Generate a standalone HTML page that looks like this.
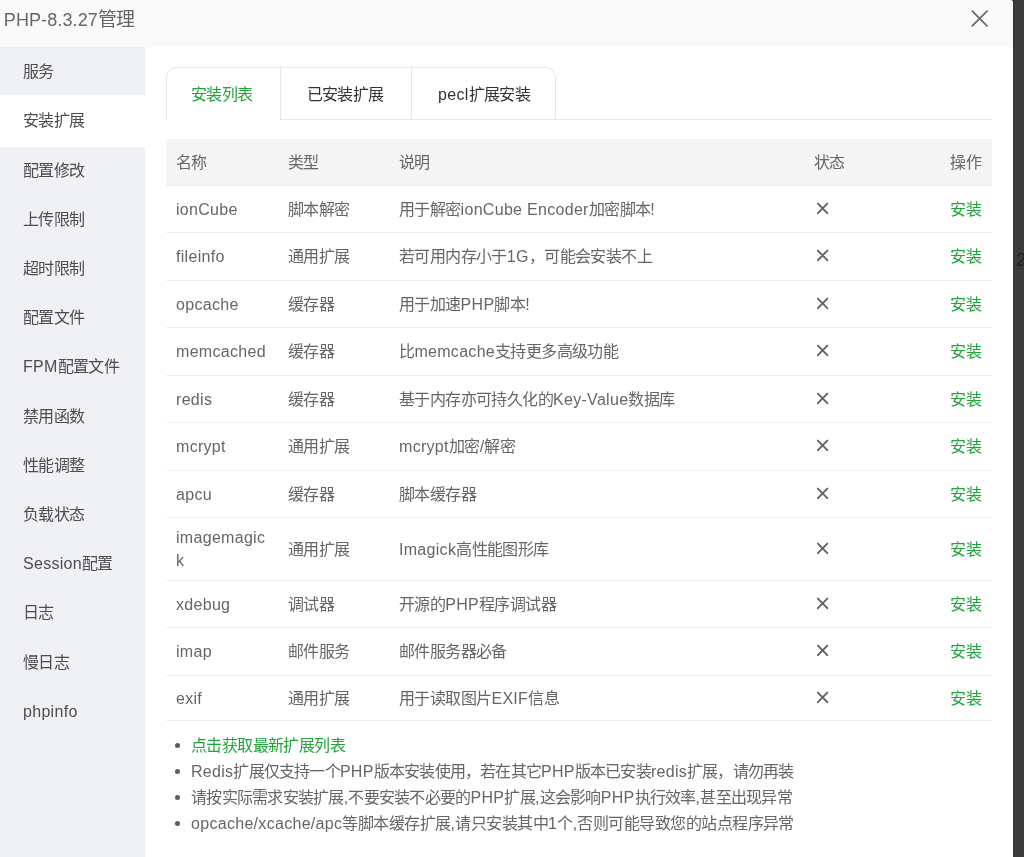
<!DOCTYPE html>
<html lang="zh-CN"><head><meta charset="utf-8">
<style>
*{box-sizing:border-box;margin:0;padding:0}
html,body{font-weight:300;letter-spacing:0.3px;width:1024px;height:857px;overflow:hidden;background:#3b3b3b;font-family:"Liberation Sans",sans-serif}
#modal{will-change:transform;position:absolute;left:0;top:0;width:1013px;height:880px;background:#fff;border-top-right-radius:3px;overflow:hidden}
#hdr{position:absolute;left:0;top:0;width:1013px;height:47px;background:#fafafa}
#title{position:absolute;left:3.8px;top:8.4px;font-size:18px;letter-spacing:0.1px;line-height:24px;color:#666;white-space:nowrap}
#close{position:absolute;left:971px;top:10px}
#side{position:absolute;left:0;top:47px;width:145px;height:830px;background:#f0f1f5}
.si{position:absolute;left:23px;font-size:16px;line-height:20px;color:#4d4d4d;white-space:nowrap}
#act{position:absolute;left:0;top:48px;width:145px;height:52px;background:#fff}
#tabs{position:absolute;left:166px;top:67px;width:390px;height:53px;border:1px solid #e4e7ed;border-bottom:none;border-radius:10px 10px 0 0}
#tabline{position:absolute;left:280px;top:119px;width:712px;height:1px;background:#e4e7ed}
.tsep{position:absolute;top:0;width:1px;height:52px;background:#e4e7ed}
.tt{position:absolute;top:16.8px;font-size:16px;line-height:20px;color:#333;white-space:nowrap}
#thead{position:absolute;left:166px;width:826px;background:#f5f5f5;border-bottom:1px solid #eef0f5}
.row{position:absolute;left:166px;width:826px;border-bottom:1px solid #eef0f5}
.c{position:absolute;font-size:16px;line-height:23px;color:#666;white-space:nowrap}
.g{color:#20a53a}
.x{position:absolute}
#notes{position:absolute;left:166px;top:733px}
.n{position:absolute;left:25px;font-size:16px;line-height:26px;color:#666;white-space:nowrap}
.n.g{color:#20a53a}
.n:before{content:"";position:absolute;left:-16px;top:9.8px;width:5.2px;height:5.2px;border-radius:50%;background:#5a5c62}
#bg2{position:absolute;left:1016px;top:250px;font-size:18px;line-height:20px;color:#222}
.k{letter-spacing:-0.6px}
#edge{position:absolute;left:1013px;top:0;width:1px;height:857px;background:#2f2f2f}
#title .k{font-size:19px;letter-spacing:-0.6px}
</style></head><body>
<div id="modal">
 <div id="hdr"><div id="title">PHP-8.3.27<span class="k">管理</span></div>
  <svg id="close" width="17" height="17" viewBox="0 0 17 17"><path d="M1.3 1.2L16 15.9M16 1.2L1.3 15.9" stroke="#66686d" stroke-width="1.7" stroke-linecap="round" fill="none"/></svg></div>
 <div id="side"><div id="act"></div>
  <div class="si" style="top:15.2px"><span class="k">服务</span></div>
  <div class="si" style="top:64.4px"><span class="k">安装扩展</span></div>
  <div class="si" style="top:113.6px"><span class="k">配置修改</span></div>
  <div class="si" style="top:162.8px"><span class="k">上传限制</span></div>
  <div class="si" style="top:212.0px"><span class="k">超时限制</span></div>
  <div class="si" style="top:261.2px"><span class="k">配置文件</span></div>
  <div class="si" style="top:310.4px">FPM<span class="k">配置文件</span></div>
  <div class="si" style="top:359.6px"><span class="k">禁用函数</span></div>
  <div class="si" style="top:408.8px"><span class="k">性能调整</span></div>
  <div class="si" style="top:458.0px"><span class="k">负载状态</span></div>
  <div class="si" style="top:507.2px">Session<span class="k">配置</span></div>
  <div class="si" style="top:556.4px"><span class="k">日志</span></div>
  <div class="si" style="top:605.6px"><span class="k">慢日志</span></div>
  <div class="si" style="top:654.8px">phpinfo</div>
 </div>
 <div id="tabs">
  <div class="tsep" style="left:113px"></div>
  <div class="tsep" style="left:244px"></div>
  <div class="tt g" style="left:24px"><span class="k">安装列表</span></div>
  <div class="tt" style="left:139.5px"><span class="k">已安装扩展</span></div>
  <div class="tt" style="left:271px">pecl<span class="k">扩展安装</span></div>
 </div>
 <div id="tabline"></div>
 <div id="thead" style="top:139px;height:47px"><div class="c h" style="left:10px;top:11.5px"><span class="k">名称</span></div><div class="c h" style="left:122px;top:11.5px"><span class="k">类型</span></div><div class="c h" style="left:233px;top:11.5px"><span class="k">说明</span></div><div class="c h" style="left:648px;top:11.5px"><span class="k">状态</span></div><div class="c h" style="right:11px;top:11.5px"><span class="k">操作</span></div></div>
 <div class="row" style="top:186px;height:47px"><div class="c" style="left:10px;top:11.5px">ionCube</div><div class="c" style="left:122px;top:11.5px"><span class="k">脚本解密</span></div><div class="c" style="left:233px;top:11.5px"><span class="k">用于解密</span>ionCube Encoder<span class="k">加密脚本</span>!</div><svg class="x" style="left:650px;top:15.5px" width="14" height="14" viewBox="0 0 14 14"><path d="M1.9 1.6L11.3 11.2M11.3 1.6L1.9 11.2" stroke="#5f6268" stroke-width="1.9" stroke-linecap="round"/></svg><div class="c g" style="right:11px;top:11.5px"><span class="k">安装</span></div></div>
 <div class="row" style="top:233px;height:48px"><div class="c" style="left:10px;top:12.0px">fileinfo</div><div class="c" style="left:122px;top:12.0px"><span class="k">通用扩展</span></div><div class="c" style="left:233px;top:12.0px"><span class="k">若可用内存小于</span>1G<span class="k">，可能会安装不上</span></div><svg class="x" style="left:650px;top:16.0px" width="14" height="14" viewBox="0 0 14 14"><path d="M1.9 1.6L11.3 11.2M11.3 1.6L1.9 11.2" stroke="#5f6268" stroke-width="1.9" stroke-linecap="round"/></svg><div class="c g" style="right:11px;top:12.0px"><span class="k">安装</span></div></div>
 <div class="row" style="top:281px;height:47px"><div class="c" style="left:10px;top:11.5px">opcache</div><div class="c" style="left:122px;top:11.5px"><span class="k">缓存器</span></div><div class="c" style="left:233px;top:11.5px"><span class="k">用于加速</span>PHP<span class="k">脚本</span>!</div><svg class="x" style="left:650px;top:15.5px" width="14" height="14" viewBox="0 0 14 14"><path d="M1.9 1.6L11.3 11.2M11.3 1.6L1.9 11.2" stroke="#5f6268" stroke-width="1.9" stroke-linecap="round"/></svg><div class="c g" style="right:11px;top:11.5px"><span class="k">安装</span></div></div>
 <div class="row" style="top:328px;height:48px"><div class="c" style="left:10px;top:12.0px">memcached</div><div class="c" style="left:122px;top:12.0px"><span class="k">缓存器</span></div><div class="c" style="left:233px;top:12.0px"><span class="k">比</span>memcache<span class="k">支持更多高级功能</span></div><svg class="x" style="left:650px;top:16.0px" width="14" height="14" viewBox="0 0 14 14"><path d="M1.9 1.6L11.3 11.2M11.3 1.6L1.9 11.2" stroke="#5f6268" stroke-width="1.9" stroke-linecap="round"/></svg><div class="c g" style="right:11px;top:12.0px"><span class="k">安装</span></div></div>
 <div class="row" style="top:376px;height:47px"><div class="c" style="left:10px;top:11.5px">redis</div><div class="c" style="left:122px;top:11.5px"><span class="k">缓存器</span></div><div class="c" style="left:233px;top:11.5px"><span class="k">基于内存亦可持久化的</span>Key-Value<span class="k">数据库</span></div><svg class="x" style="left:650px;top:15.5px" width="14" height="14" viewBox="0 0 14 14"><path d="M1.9 1.6L11.3 11.2M11.3 1.6L1.9 11.2" stroke="#5f6268" stroke-width="1.9" stroke-linecap="round"/></svg><div class="c g" style="right:11px;top:11.5px"><span class="k">安装</span></div></div>
 <div class="row" style="top:423px;height:48px"><div class="c" style="left:10px;top:12.0px">mcrypt</div><div class="c" style="left:122px;top:12.0px"><span class="k">通用扩展</span></div><div class="c" style="left:233px;top:12.0px">mcrypt<span class="k">加密</span>/<span class="k">解密</span></div><svg class="x" style="left:650px;top:16.0px" width="14" height="14" viewBox="0 0 14 14"><path d="M1.9 1.6L11.3 11.2M11.3 1.6L1.9 11.2" stroke="#5f6268" stroke-width="1.9" stroke-linecap="round"/></svg><div class="c g" style="right:11px;top:12.0px"><span class="k">安装</span></div></div>
 <div class="row" style="top:471px;height:47px"><div class="c" style="left:10px;top:11.5px">apcu</div><div class="c" style="left:122px;top:11.5px"><span class="k">缓存器</span></div><div class="c" style="left:233px;top:11.5px"><span class="k">脚本缓存器</span></div><svg class="x" style="left:650px;top:15.5px" width="14" height="14" viewBox="0 0 14 14"><path d="M1.9 1.6L11.3 11.2M11.3 1.6L1.9 11.2" stroke="#5f6268" stroke-width="1.9" stroke-linecap="round"/></svg><div class="c g" style="right:11px;top:11.5px"><span class="k">安装</span></div></div>
 <div class="row" style="top:518px;height:63px"><div class="c" style="left:10px;top:8.0px">imagemagic<br>k</div><div class="c" style="left:122px;top:19.5px"><span class="k">通用扩展</span></div><div class="c" style="left:233px;top:19.5px">Imagick<span class="k">高性能图形库</span></div><svg class="x" style="left:650px;top:23.5px" width="14" height="14" viewBox="0 0 14 14"><path d="M1.9 1.6L11.3 11.2M11.3 1.6L1.9 11.2" stroke="#5f6268" stroke-width="1.9" stroke-linecap="round"/></svg><div class="c g" style="right:11px;top:19.5px"><span class="k">安装</span></div></div>
 <div class="row" style="top:581px;height:47px"><div class="c" style="left:10px;top:11.5px">xdebug</div><div class="c" style="left:122px;top:11.5px"><span class="k">调试器</span></div><div class="c" style="left:233px;top:11.5px"><span class="k">开源的</span>PHP<span class="k">程序调试器</span></div><svg class="x" style="left:650px;top:15.5px" width="14" height="14" viewBox="0 0 14 14"><path d="M1.9 1.6L11.3 11.2M11.3 1.6L1.9 11.2" stroke="#5f6268" stroke-width="1.9" stroke-linecap="round"/></svg><div class="c g" style="right:11px;top:11.5px"><span class="k">安装</span></div></div>
 <div class="row" style="top:628px;height:48px"><div class="c" style="left:10px;top:12.0px">imap</div><div class="c" style="left:122px;top:12.0px"><span class="k">邮件服务</span></div><div class="c" style="left:233px;top:12.0px"><span class="k">邮件服务器必备</span></div><svg class="x" style="left:650px;top:16.0px" width="14" height="14" viewBox="0 0 14 14"><path d="M1.9 1.6L11.3 11.2M11.3 1.6L1.9 11.2" stroke="#5f6268" stroke-width="1.9" stroke-linecap="round"/></svg><div class="c g" style="right:11px;top:12.0px"><span class="k">安装</span></div></div>
 <div class="row" style="top:676px;height:45px"><div class="c" style="left:10px;top:10.5px">exif</div><div class="c" style="left:122px;top:10.5px"><span class="k">通用扩展</span></div><div class="c" style="left:233px;top:10.5px"><span class="k">用于读取图片</span>EXIF<span class="k">信息</span></div><svg class="x" style="left:650px;top:14.5px" width="14" height="14" viewBox="0 0 14 14"><path d="M1.9 1.6L11.3 11.2M11.3 1.6L1.9 11.2" stroke="#5f6268" stroke-width="1.9" stroke-linecap="round"/></svg><div class="c g" style="right:11px;top:10.5px"><span class="k">安装</span></div></div>
 <div id="notes">
  <div class="n g" style="top:0px"><span class="k" style="letter-spacing:-0.6px">点击获取最新扩展列表</span></div>
  <div class="n " style="top:26px">Redis<span class="k" style="letter-spacing:-0.79px">扩展仅支持一个</span>PHP<span class="k" style="letter-spacing:-0.79px">版本安装使用，若在其它</span>PHP<span class="k" style="letter-spacing:-0.79px">版本已安装</span>redis<span class="k" style="letter-spacing:-0.79px">扩展，请勿再装</span></div>
  <div class="n " style="top:52px"><span class="k" style="letter-spacing:-0.735px">请按实际需求安装扩展</span>,<span class="k" style="letter-spacing:-0.735px">不要安装不必要的</span>PHP<span class="k" style="letter-spacing:-0.735px">扩展</span>,<span class="k" style="letter-spacing:-0.735px">这会影响</span>PHP<span class="k" style="letter-spacing:-0.735px">执行效率</span>,<span class="k" style="letter-spacing:-0.735px">甚至出现异常</span></div>
  <div class="n " style="top:78px">opcache/xcache/apc<span class="k" style="letter-spacing:-0.54px">等脚本缓存扩展</span>,<span class="k" style="letter-spacing:-0.54px">请只安装其中</span>1<span class="k" style="letter-spacing:-0.54px">个</span>,<span class="k" style="letter-spacing:-0.54px">否则可能导致您的站点程序异常</span></div>
 </div>
</div>
<div id="edge"></div><div id="bg2">2</div>
</body></html>
